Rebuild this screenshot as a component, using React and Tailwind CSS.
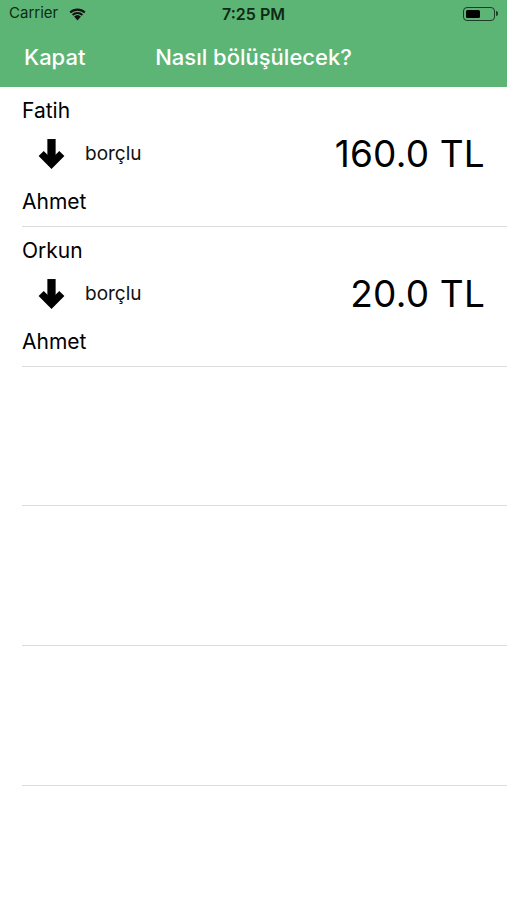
import React from 'react';

const debts = [
  { from: 'Fatih', to: 'Ahmet', amount: '160.0 TL' },
  { from: 'Orkun', to: 'Ahmet', amount: '20.0 TL' },
];

const font = { fontFamily: 'Inter, "Liberation Sans", sans-serif' };

const ArrowDown = () => (
  <svg width="29" height="31" viewBox="0 0 28 30" className="block">
    <path d="M14 1 V24" stroke="#000" strokeWidth="8" />
    <path d="M4 15 L14 25 L24 15" stroke="#000" strokeWidth="7" fill="none" strokeLinejoin="miter" />
  </svg>
);

const Wifi = () => (
  <svg width="21" height="15" viewBox="0 0 20 15" className="block">
    <path d="M10 14.5 L6.6 10.6 A5 5 0 0 1 13.4 10.6 Z" fill="#111" />
    <path d="M4.4 8.3 A8 8 0 0 1 15.6 8.3 L14.2 9.8 A6 6 0 0 0 5.8 9.8 Z" fill="#111" />
    <path d="M2 5.8 A11.5 11.5 0 0 1 18 5.8 L16.6 7.3 A9.5 9.5 0 0 0 3.4 7.3 Z" fill="#111" />
  </svg>
);

const Battery = () => (
  <div className="flex items-center">
    <div className="w-[32px] h-[14px] rounded-[4px] border border-[#1d3b26] p-[2px]">
      <div className="h-full w-[55%] bg-black rounded-[1.5px]" />
    </div>
    <div className="w-[2px] h-[5px] bg-[#1d3b26] rounded-r-sm ml-[1px]" />
  </div>
);

const DebtRow = ({ item }) => (
  <div className="h-[140px] ml-[22px] border-b border-[#dcdcdc] pt-[11px]">
    <div className="text-[21px] leading-[26px] text-black">{item.from}</div>
    <div className="flex items-center h-[42px] mt-[9px] pr-[22px]">
      <div className="ml-[15px] mt-[-2px]">
        <ArrowDown />
      </div>
      <span className="ml-[19px] text-[19px] text-[#111]">borçlu</span>
      <span className="ml-auto text-[37px] text-black tracking-[0.2px]">{item.amount}</span>
    </div>
    <div className="text-[21px] leading-[26px] mt-[14px] text-black">{item.to}</div>
  </div>
);

export default function App() {
  return (
    <div className="w-[507px] h-[900px] bg-white overflow-hidden" style={font}>
      <div className="bg-[#5cb574]">
        <div className="h-[27px] flex items-center px-[9px] relative">
          <span className="text-[15px] text-[#0f2a16]">Carrier</span>
          <span className="ml-[9px]"><Wifi /></span>
          <span className="absolute left-1/2 -translate-x-1/2 text-[16px] font-semibold text-[#0f2a16]">7:25 PM</span>
          <span className="ml-auto"><Battery /></span>
        </div>
        <div className="h-[60px] flex items-center relative px-[24px]">
          <span className="text-[22px] font-medium text-white">Kapat</span>
          <span className="absolute left-1/2 -translate-x-1/2 text-[22px] font-medium text-white whitespace-nowrap">Nasıl bölüşülecek?</span>
        </div>
      </div>
      {debts.map((d) => (
        <DebtRow key={d.from} item={d} />
      ))}
      <div className="h-[139px] ml-[22px] border-b border-[#dcdcdc]" />
      <div className="h-[140px] ml-[22px] border-b border-[#dcdcdc]" />
      <div className="h-[140px] ml-[22px] border-b border-[#dcdcdc]" />
    </div>
  );
}
